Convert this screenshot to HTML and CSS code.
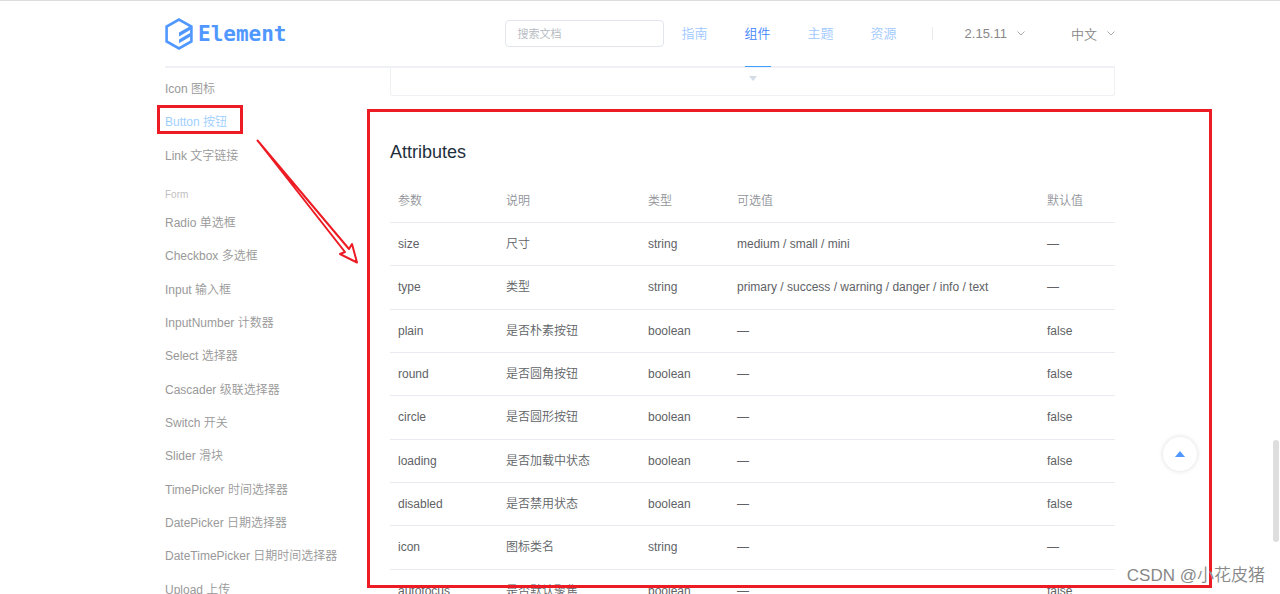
FILE: index.html
```html
<!DOCTYPE html>
<html lang="zh-CN">
<head>
<meta charset="utf-8">
<title>Element</title>
<link rel="stylesheet" href="styles.css">
</head>
<body>
<header class="header">
  <div class="container header-inner">
    <a class="logo" href="#">
      <svg class="logo-mark" viewBox="0 0 28 32" aria-hidden="true">
        <path d="M14 1.6 26.4 8.6V23.4L14 30.4 1.6 23.4V8.6Z" fill="none" stroke="#5098ff" stroke-width="2.6"/>
        <path d="M14 14.6 25.500 8V11.800L14 18.400ZM14 21.400 25.500 14.800V18.600L14 25.200Z" fill="#5098ff"/>
      </svg>
      <span class="logo-text">Element</span>
    </a>
    <input class="search" type="text" placeholder="搜索文档" aria-label="搜索文档">
    <nav class="nav">
      <a class="nav-link" href="#">指南</a>
      <a class="nav-link active" href="#">组件</a>
      <a class="nav-link" href="#">主题</a>
      <a class="nav-link" href="#">资源</a>
    </nav>
    <span class="divider"></span>
    <button class="dropdown version" type="button">2.15.11
      <svg class="chevron" viewBox="0 0 8 5" aria-hidden="true"><path d="M.5.5 4 4 7.5.5"/></svg>
    </button>
    <button class="dropdown" type="button">中文
      <svg class="chevron" viewBox="0 0 8 5" aria-hidden="true"><path d="M.5.5 4 4 7.5.5"/></svg>
    </button>
  </div>
</header>
<div class="container page">
  <aside class="sidebar">
    <ul class="menu">
      <li><a href="#">Icon 图标</a></li>
      <li><a class="current" href="#">Button 按钮</a></li>
      <li><a href="#">Link 文字链接</a></li>
    </ul>
    <div class="menu-title">Form</div>
    <ul class="menu menu-form">
      <li><a href="#">Radio 单选框</a></li>
      <li><a href="#">Checkbox 多选框</a></li>
      <li><a href="#">Input 输入框</a></li>
      <li><a href="#">InputNumber 计数器</a></li>
      <li><a href="#">Select 选择器</a></li>
      <li><a href="#">Cascader 级联选择器</a></li>
      <li><a href="#">Switch 开关</a></li>
      <li><a href="#">Slider 滑块</a></li>
      <li><a href="#">TimePicker 时间选择器</a></li>
      <li><a href="#">DatePicker 日期选择器</a></li>
      <li><a href="#">DateTimePicker 日期时间选择器</a></li>
      <li><a href="#">Upload 上传</a></li>
    </ul>
  </aside>
  <main class="content">
    <button class="demo-control" type="button" aria-label="显示代码">
      <svg class="caret" viewBox="0 0 8 5" aria-hidden="true"><path d="M0 0H8L4 5Z" fill="#d3dce6"/></svg>
    </button>
    <h2 class="title">Attributes</h2>
    <table class="table">
      <colgroup><col class="c-name"><col class="c-desc"><col class="c-type"><col class="c-options"><col></colgroup>
      <thead>
        <tr><th>参数</th><th>说明</th><th>类型</th><th>可选值</th><th>默认值</th></tr>
      </thead>
      <tbody>
        <tr><td>size</td><td>尺寸</td><td>string</td><td>medium / small / mini</td><td>—</td></tr>
        <tr><td>type</td><td>类型</td><td>string</td><td>primary / success / warning / danger / info / text</td><td>—</td></tr>
        <tr><td>plain</td><td>是否朴素按钮</td><td>boolean</td><td>—</td><td>false</td></tr>
        <tr><td>round</td><td>是否圆角按钮</td><td>boolean</td><td>—</td><td>false</td></tr>
        <tr><td>circle</td><td>是否圆形按钮</td><td>boolean</td><td>—</td><td>false</td></tr>
        <tr><td>loading</td><td>是否加载中状态</td><td>boolean</td><td>—</td><td>false</td></tr>
        <tr><td>disabled</td><td>是否禁用状态</td><td>boolean</td><td>—</td><td>false</td></tr>
        <tr><td>icon</td><td>图标类名</td><td>string</td><td>—</td><td>—</td></tr>
        <tr><td>autofocus</td><td>是否默认聚焦</td><td>boolean</td><td>—</td><td>false</td></tr>
      </tbody>
    </table>
  </main>
</div>
<button class="backtop" type="button" aria-label="回到顶部">
  <svg class="backtop-icon" viewBox="0 0 10 6" aria-hidden="true"><path d="M0 6H10L5 0Z" fill="#5098ff"/></svg>
</button>
<div class="scroll-thumb"></div>
<svg class="marks" viewBox="0 0 1280 594" aria-hidden="true">
  <rect x="158.500" y="106.500" width="83" height="26"/>
  <rect x="368.500" y="110.500" width="842" height="476"/>
  <path class="arrow" d="M257.500 140.500 349 249 352 244 357 262.500 340 254 345 252Z"/>
</svg>
<div class="watermark">CSDN @小花皮猪</div>
</body>
</html>
```

FILE: styles.css
```css
* {
  box-sizing: border-box;
}

body {
  position: relative;
  height: 100vh;
  margin: 0;
  overflow: hidden;
  border-top: 1px solid #dcdcdc;
  background: #fff;
  font-family: "Liberation Sans", "Noto Sans CJK SC", sans-serif;
  font-size: 12px;
  font-weight: 350;
  color: #606266;
}

a {
  color: inherit;
  text-decoration: none;
}

button {
  padding: 0;
  border: 0;
  background: none;
  font: inherit;
  color: inherit;
}

.container {
  max-width: 950px;
  margin: 0 auto;
}

.header-inner {
  display: flex;
  align-items: center;
  height: 67px;
  border-bottom: 2px solid #f0f1f7;
}

.logo {
  display: flex;
  align-items: center;
  gap: 5px;
  margin-right: auto;
  color: #5098ff;
}

.logo-mark {
  width: 28px;
  height: 32px;
}

.logo-text {
  font: bold 21px/32px "DejaVu Sans Mono", monospace;
}

.search {
  width: 159px;
  height: 27px;
  padding: 0 12px;
  border: 1px solid #e2e5ee;
  border-radius: 4px;
  font: inherit;
  font-size: 11px;
}

.search::placeholder {
  color: #b4b8c0;
}

.nav {
  display: flex;
  gap: 37px;
  height: 67px;
  padding-top: 1px;
  margin-left: 18px;
}

.nav-link {
  font-size: 13px;
  line-height: 65px;
  color: #a0c8ff;
}

.nav-link.active {
  border-bottom: 1px solid #409eff;
  color: #3f86ff;
}

.divider {
  width: 1px;
  height: 13px;
  margin: 0 32px 0 35px;
  background: #ebebeb;
}

.dropdown {
  display: flex;
  align-items: center;
  gap: 10px;
  font-size: 13px;
  color: #888;
}

.version {
  margin-right: 46px;
}

.chevron {
  width: 8px;
  height: 5px;
  fill: none;
  stroke: #aaa;
}

.page {
  display: flex;
}

.sidebar {
  width: 225px;
  padding-top: 5px;
  color: #999;
}

.menu {
  display: grid;
  grid-auto-rows: 1fr;
  height: 100px;
  margin: 0;
  padding: 0;
  list-style: none;
  line-height: 33px;
}

.menu-form {
  height: 400px;
}

.current {
  color: #a0cfff;
}

.menu-title {
  padding-top: 10px;
  font-size: 10px;
  line-height: 24px;
  color: #c0c0c0;
}

.content {
  flex: 1;
}

.demo-control {
  display: flex;
  justify-content: center;
  width: 100%;
  height: 28px;
  padding-top: 8px;
  border: 1px solid #eff0f3;
  border-top: 0;
  border-radius: 0 0 3px 3px;
}

.caret {
  width: 8px;
  height: 5px;
}

.title {
  margin: 44px 0 16px;
  font-size: 18px;
  font-weight: 400;
  line-height: 24px;
  color: #1f2f3d;
}

.table {
  width: 100%;
  height: 433px;
  border-collapse: collapse;
  table-layout: fixed;
  line-height: 18px;
}

.table th,
.table td {
  padding: 12px 8px;
  border-bottom: 1px solid #e9ebf0;
  font-weight: inherit;
  text-align: left;
  white-space: nowrap;
}

.table th {
  color: #909399;
}

.c-name {
  width: 108px;
}

.c-desc {
  width: 142px;
}

.c-type {
  width: 89px;
}

.c-options {
  width: 310px;
}

.backtop {
  position: absolute;
  top: 436px;
  right: 83px;
  display: grid;
  place-items: center;
  width: 34px;
  height: 34px;
  border-radius: 50%;
  background: #fff;
  box-shadow: 0 0 5px rgba(0, 0, 0, 0.14);
}

.backtop-icon {
  width: 10px;
  height: 6px;
}

.scroll-thumb {
  position: absolute;
  top: 439px;
  right: 1px;
  width: 6px;
  height: 102px;
  border-radius: 3px;
  background: #dedede;
}

.marks {
  position: absolute;
  top: -1px;
  left: 0;
  width: 1280px;
  height: 594px;
  fill: none;
  stroke: #ed1c24;
  stroke-width: 3;
  pointer-events: none;
}

.arrow {
  stroke-width: 2;
  stroke-linejoin: round;
}

.watermark {
  position: absolute;
  right: 15px;
  bottom: 5px;
  font-size: 17px;
  line-height: 26px;
  color: #888;
  text-shadow: 1px 1px 1px #fff;
}
```
